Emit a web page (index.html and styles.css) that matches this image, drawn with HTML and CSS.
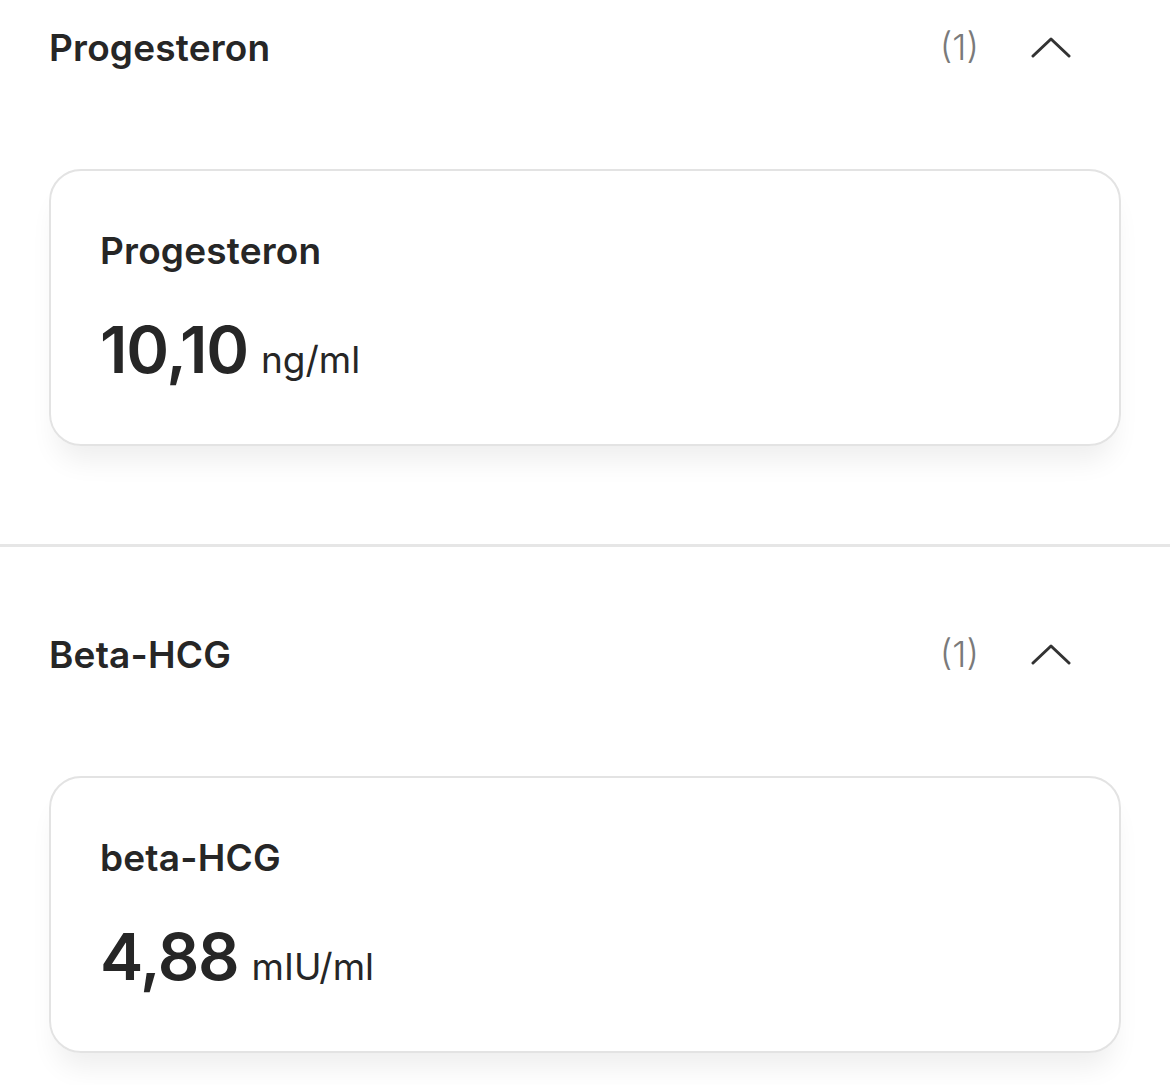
FILE: index.html
```html
<!DOCTYPE html>
<html lang="de">
<head>
    <meta charset="UTF-8">
    <title>Laborwerte</title>
    <link rel="stylesheet" href="styles.css">
</head>
<body>
<div class="groups">
    <div class="group">
        <div class="group-head">
            <span class="group-title">Progesteron</span>
            <span class="group-count">(1)</span>
            <svg class="chevron" viewBox="0 0 40 22" width="40" height="22">
                <path d="M2 20 L20 3 L38 20" fill="none" stroke="#333" stroke-width="3" stroke-linecap="round" stroke-linejoin="round"/>
            </svg>
        </div>
        <div class="card">
            <div class="card-title">Progesteron</div>
            <div class="card-value">
                <span class="num">10,10</span>
                <span class="unit">ng/ml</span>
            </div>
        </div>
    </div>
    <div class="group">
        <div class="group-head">
            <span class="group-title">Beta-HCG</span>
            <span class="group-count">(1)</span>
            <svg class="chevron" viewBox="0 0 40 22" width="40" height="22">
                <path d="M2 20 L20 3 L38 20" fill="none" stroke="#333" stroke-width="3" stroke-linecap="round" stroke-linejoin="round"/>
            </svg>
        </div>
        <div class="card">
            <div class="card-title">beta-HCG</div>
            <div class="card-value">
                <span class="num">4,88</span>
                <span class="unit">mIU/ml</span>
            </div>
        </div>
    </div>
</div>
</body>
</html>
```

FILE: styles.css
```css
*{margin:0;padding:0;box-sizing:border-box;}
body{
    background:#fff;
    font-family:Inter,"Noto Sans",sans-serif;
    color:#262626;
    overflow:hidden;
}
.groups{margin-top:-60px;}
.group{
    padding:67px 49px 98px;
    border-bottom:3px solid #e6e6e6;
}
.group-head{
    height:80px;
    display:flex;
    align-items:center;
}
.group-title{
    flex:1;
    font-size:37px;
    font-weight:600;
    letter-spacing:0.2px;
}
.group-count{
    font-size:36px;
    font-weight:300;
    color:#7a7a7a;
    margin-right:52px;
}
.chevron{margin-right:50px;}
.card{
    margin-top:82px;
    height:277px;
    border:2px solid #e3e3e3;
    border-radius:32px;
    padding:55px 49px 0;
    box-shadow:0 22px 28px -8px rgba(0,0,0,0.07);
}
.card-title{
    font-size:37px;
    font-weight:600;
    letter-spacing:0.2px;
    line-height:50px;
}
.card-value{
    margin-top:34px;
    display:flex;
    align-items:baseline;
    gap:13px;
}
.num{
    font-size:65px;
    font-weight:600;
    letter-spacing:-1.2px;
}
.unit{
    font-size:37px;
    font-weight:400;
}
```
